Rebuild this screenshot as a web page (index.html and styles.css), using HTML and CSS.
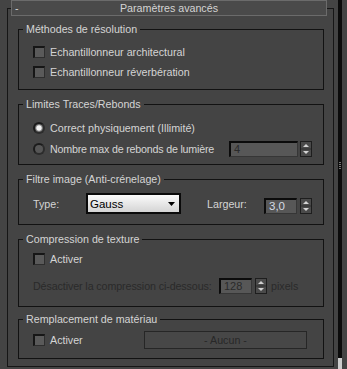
FILE: index.html
```html
<!DOCTYPE html>
<html lang="fr">
<head>
<meta charset="utf-8">
<title>Paramètres avancés</title>
<link rel="stylesheet" href="styles.css">
</head>
<body>
<div class="app">
  <div class="main">
    <div class="frame">
      <div class="titlebar"><span class="minus">-</span><span class="title">Paramètres avancés</span><span></span></div>

      <div class="group g1">
        <div class="legend">Méthodes de résolution</div>
        <div class="row h20"><span class="check"></span><span>Echantillonneur architectural</span></div>
        <div class="row h20"><span class="check"></span><span>Echantillonneur réverbération</span></div>
      </div>

      <div class="group g2">
        <div class="legend">Limites Traces/Rebonds</div>
        <div class="row h21"><span class="radio on"></span><span>Correct physiquement (Illimité)</span></div>
        <div class="row h21"><span class="radio"></span><span class="tight">Nombre max de rebonds de lumière</span>
          <span class="field wide dim">4</span>
          <svg class="spin" width="12" height="16" viewBox="0 0 12 16"><rect x="0.5" y="0.5" width="11" height="15" fill="#4a4a4a" stroke="#1e1e1e"/><line x1="1" y1="8" x2="11" y2="8" stroke="#2e2e2e"/><path d="M6 3 L9 6 L3 6 Z" fill="#d4d4d4"/><path d="M3 10 L9 10 L6 13 Z" fill="#d4d4d4"/></svg>
        </div>
      </div>

      <div class="group g3">
        <div class="legend">Filtre image (Anti-crénelage)</div>
        <div class="row h22 filter">
          <span class="lbl-type">Type:</span>
          <span class="select"><span>Gauss</span><svg width="7" height="4" viewBox="0 0 7 4"><path d="M0 0 H7 L3.5 4 Z" fill="#000"/></svg></span>
          <span class="lbl-width">Largeur:</span>
          <span class="field short val">3,0</span>
          <svg class="spin" width="12" height="16" viewBox="0 0 12 16"><rect x="0.5" y="0.5" width="11" height="15" fill="#4a4a4a" stroke="#1e1e1e"/><line x1="1" y1="8" x2="11" y2="8" stroke="#2e2e2e"/><path d="M6 3 L9 6 L3 6 Z" fill="#d4d4d4"/><path d="M3 10 L9 10 L6 13 Z" fill="#d4d4d4"/></svg>
        </div>
      </div>

      <div class="group g4">
        <div class="legend">Compression de texture</div>
        <div class="row h20"><span class="check"></span><span>Activer</span></div>
        <div class="row h20 comp dim">
          <span class="lbl-comp">Désactiver la compression ci-dessous:</span>
          <span class="field short dim">128</span>
          <svg class="spin" width="12" height="16" viewBox="0 0 12 16"><rect x="0.5" y="0.5" width="11" height="15" fill="#4a4a4a" stroke="#1e1e1e"/><line x1="1" y1="8" x2="11" y2="8" stroke="#2e2e2e"/><path d="M6 3 L9 6 L3 6 Z" fill="#cfcfcf"/><path d="M3 10 L9 10 L6 13 Z" fill="#cfcfcf"/></svg>
          <span class="px">pixels</span>
        </div>
      </div>

      <div class="group g5">
        <div class="legend">Remplacement de matériau</div>
        <div class="row h21 mat"><span class="check"></span><span>Activer</span><span class="button">- Aucun -</span></div>
      </div>
    </div>
  </div>
  <div class="scrollbar"><div class="grip"></div><div class="thumb"></div></div>
</div>
</body>
</html>
```
FILE: styles.css
```css
html, body {
  margin: 0;
  padding: 0;
}
body {
  background: #444444;
  width: 347px;
  height: 369px;
  overflow: hidden;
  font-family: "Liberation Sans", Arial, sans-serif;
  font-size: 10.7px;
  color: #d4d4d4;
}
.app {
  display: flex;
  height: 369px;
}
.main {
  width: 338px;
  flex: none;
}
.scrollbar {
  width: 4px;
  flex: none;
  background: #0b0b0b;
  display: flex;
  flex-direction: column;
}
.grip {
  margin: 162px 0 0 1px;
  width: 2px;
  height: 8px;
  background: repeating-linear-gradient(to bottom, #777 0 1px, transparent 1px 2px);
}
.thumb {
  margin-top: auto;
  height: 11px;
  background: #cdcdcd;
}
.frame {
  box-sizing: border-box;
  margin: 8px 0 0 7px;
  width: 327px;
  height: 359px;
  border: 1px solid #161616;
}
.titlebar {
  box-sizing: border-box;
  height: 16px;
  margin: -9px 6px 0 3px;
  border: 1px solid #6b6b6b;
  background: #4a4a4a;
  display: grid;
  grid-template-columns: 1fr auto 1fr;
  align-items: center;
  line-height: 14px;
}
.minus {
  padding-left: 3px;
}
.group {
  box-sizing: border-box;
  margin-left: 10px;
  width: 306px;
  border: 1px solid #121212;
  padding: 0 11px 0 14px;
}
.legend {
  margin: -8px 0 6px -10px;
  padding: 0 3px;
  width: max-content;
  background: #444444;
  line-height: 14px;
}
.g1 { margin-top: 13px; padding-bottom: 7px; }
.g2 { margin-top: 14px; padding-bottom: 5px; }
.g3 { margin-top: 14px; padding-bottom: 10px; }
.g4 { margin-top: 14px; padding-bottom: 10px; }
.g4 .legend, .g5 .legend { margin-bottom: 3px; }
.g5 { margin-top: 12px; padding-bottom: 8px; padding-right: 16px; }

.row {
  display: flex;
  align-items: center;
  white-space: nowrap;
}
.h20 { height: 20px; }
.h21 { height: 21px; }
.h22 { height: 22px; }
.comp { margin-top: 7px; }
.tight { letter-spacing: -0.2px; }

.check {
  box-sizing: border-box;
  flex: none;
  width: 12px;
  height: 12px;
  margin-right: 5px;
  border-style: solid;
  border-width: 2px 1px 1px 2px;
  border-color: #161616 #2e2e2e #2e2e2e #161616;
  background: #5a5a5a;
}
.radio {
  box-sizing: border-box;
  flex: none;
  width: 12px;
  height: 12px;
  margin-right: 5px;
  border-radius: 50%;
  border: 2px solid #1b1b1b;
  border-right-color: #2c2c2c;
  border-bottom-color: #2c2c2c;
  background: #565656;
}
.radio.on {
  background: radial-gradient(circle, #f2f2f2 0 2.2px, #9a9a9a 3px, #5a5a5a 4px);
}
.field {
  box-sizing: border-box;
  flex: none;
  height: 16px;
  border-style: solid;
  border-width: 2px 1px 1px 2px;
  border-color: #0b0b0b #363636 #363636 #0b0b0b;
  background: #575757;
  padding-left: 3px;
  line-height: 13px;
  font-size: 11px;
}
.wide {
  width: 69px;
  margin-left: auto;
}
.short {
  width: 33px;
}
.spin {
  flex: none;
  margin-left: 2px;
  display: block;
}
.dim {
  color: #2a2a2a;
}
.val {
  color: #d6dde6;
  font-size: 11.5px;
}
.filter {
  align-items: flex-end;
}
.filter > * {
  margin-bottom: 1px;
}
.lbl-type {
  width: 53px;
  flex: none;
  align-self: center;
  padding-top: 3px;
}
.select {
  box-sizing: border-box;
  flex: none;
  width: 95px;
  height: 21px;
  margin-bottom: 0;
  border: 2px solid #0a0a0a;
  background: linear-gradient(#fbfbfb, #d4d4d4);
  color: #000;
  display: flex;
  align-items: center;
  justify-content: space-between;
  padding: 0 4px 0 2px;
  font-size: 11.5px;
}
.lbl-width {
  width: 57px;
  flex: none;
  margin-left: 26px;
  align-self: center;
  padding-top: 3px;
}
.filter .spin {
  margin-bottom: 0;
  margin-left: 3px;
}
.filter .field {
  margin-bottom: 0;
}
.lbl-comp {
  width: 186px;
  flex: none;
  letter-spacing: -0.1px;
}
.comp .spin {
  margin-left: 3px;
}
.px {
  margin-left: 4px;
}
.button {
  box-sizing: border-box;
  margin-left: auto;
  width: 163px;
  height: 18px;
  border: 1px solid #262626;
  background: #474747;
  color: #282828;
  text-align: center;
  line-height: 16px;
}
```
